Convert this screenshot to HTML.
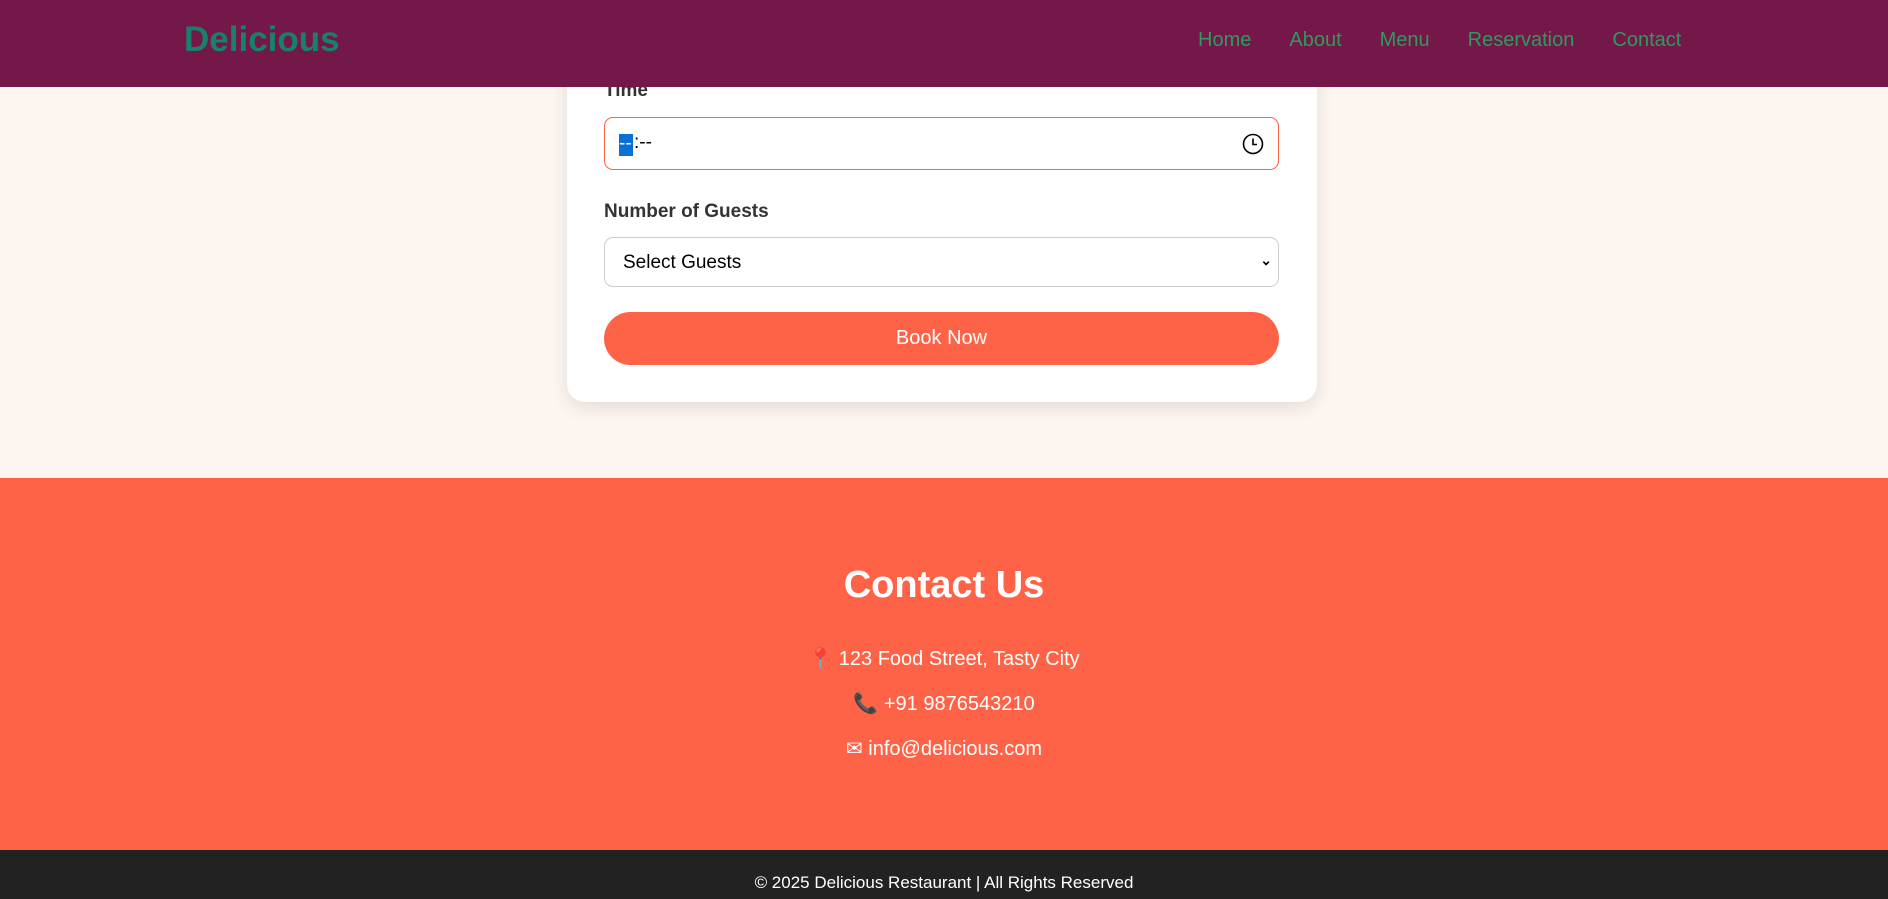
<!DOCTYPE html>
<html><head><meta charset="utf-8"><style>
*{box-sizing:border-box;margin:0;padding:0}
body{width:1888px;height:899px;overflow:hidden;background:#fdf5ef;font-family:"Liberation Sans",Arial,sans-serif;position:relative}
header{position:absolute;top:0;left:0;width:1888px;height:87px;background:#74184a;z-index:5}
.logo{position:absolute;left:184px;top:20px;font-size:35px;font-weight:bold;color:#16826e}
nav{position:absolute;top:29px;left:1198px;font-size:20px;color:#2e9a5e;white-space:nowrap}
nav span{margin-right:38px}
.card{position:absolute;left:567px;top:20px;width:750px;height:382px;background:#fff;border-radius:18px;box-shadow:0 6px 18px rgba(0,0,0,.1)}
.lbl{position:absolute;left:604px;font-size:19px;font-weight:bold;color:#333}
.inp{position:absolute;left:604px;width:675px;background:#fff;border-radius:9px}
.btn{position:absolute;left:604px;top:312px;width:675px;height:53px;border-radius:27px;background:#ff6347;color:#fff;font-size:20px;text-align:center;line-height:53px}
.contact{position:absolute;top:478px;left:0;width:1888px;height:372px;background:#ff6347;color:#fff;text-align:center}
.contact h2{position:absolute;top:86px;width:100%;font-size:38px}
.contact p{position:absolute;width:100%;font-size:20px}
.bottom{position:absolute;top:850px;left:0;width:1888px;height:49px;background:#222;color:#fff;text-align:center;font-size:17px}
</style></head><body>
<div class="card"></div>
<div class="lbl" style="top:80px">Time</div>
<div class="inp" style="top:117px;height:53px;border:1px solid #ff6347">
<span style="position:absolute;left:14px;top:16px;background:#0a6fd6;color:#fff;font-size:19px;width:14px;height:22px;line-height:20px">--</span><span style="position:absolute;left:29px;top:14px;font-size:19px">:--</span>
<svg style="position:absolute;right:14px;top:15px" width="22" height="22" viewBox="0 0 22 22"><circle cx="11" cy="11" r="9.5" fill="none" stroke="#000" stroke-width="1.6"/><path d="M11 5.5V11.5H15" fill="none" stroke="#000" stroke-width="1.6"/></svg></div>
<div class="lbl" style="top:201px">Number of Guests</div>
<div class="inp" style="top:237px;height:50px;border:1px solid #ccc"><span style="position:absolute;left:18px;top:14px;font-size:19px;color:#000">Select Guests</span><span style="position:absolute;right:6px;top:14px;font-size:14px;font-weight:bold">&#8964;</span></div>
<div class="btn">Book Now</div>
<header><div class="logo">Delicious</div><nav><span>Home</span><span>About</span><span>Menu</span><span>Reservation</span><span>Contact</span></nav></header>
<div class="contact"><h2>Contact Us</h2>
<p style="top:168px">📍 123 Food Street, Tasty City</p>
<p style="top:213px">📞 +91 9876543210</p>
<p style="top:258px">✉ info@delicious.com</p></div>
<div class="bottom" style="line-height:1;padding-top:24px">© 2025 Delicious Restaurant | All Rights Reserved</div>
</body></html>
